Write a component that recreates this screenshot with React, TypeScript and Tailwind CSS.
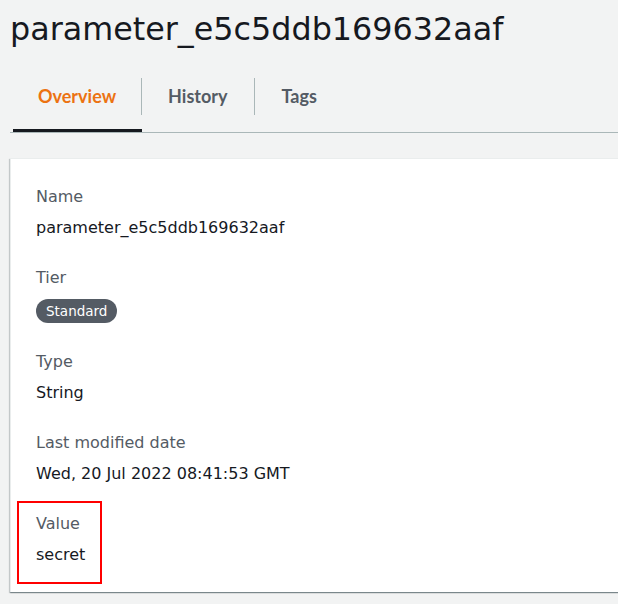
import React from "react";

const ROWS = [
  { label: "Name", value: "parameter_e5c5ddb169632aaf" },
  { label: "Tier", badge: "Standard" },
  { label: "Type", value: "String" },
  { label: "Last modified date", value: "Wed, 20 Jul 2022 08:41:53 GMT" },
];

const TABS = [
  { label: "Overview", pad: "pl-[28px] pr-[25px] text-[#ec7211]" },
  { label: "History", pad: "pl-[26px] pr-[27px] text-[#545b64]" },
  { label: "Tags", pad: "px-[26px] text-[#545b64]" },
];

export default function App() {
  return (
    <div
      className="w-[618px] h-[604px] overflow-hidden bg-[#f2f3f3] text-[#16191f]"
      style={{ fontFamily: '"DejaVu Sans", "Noto Sans", sans-serif' }}
    >
      {/* Title */}
      <h1 className="pt-[9px] pl-[10px] text-[31.8px] leading-[40px] font-normal whitespace-nowrap">
        parameter_e5c5ddb169632aaf
      </h1>

      {/* Tabs */}
      <div
        className="mt-[11px] ml-[10px] h-[73px] flex items-center border-b border-[#aab7b8]"
        style={{ fontFamily: 'Lato, "Open Sans", sans-serif' }}
      >
        {TABS.map((tab, i) => (
          <React.Fragment key={tab.label}>
            {i > 0 && <div className="w-px h-[37px] bg-[#aab7b8]" />}
            <div className={`relative h-full flex items-center text-[18px] font-bold ${tab.pad}`}>
              {tab.label}
              {i === 0 && (
                <div className="absolute left-[3px] -right-px bottom-0 h-[3px] bg-[#16191f]" />
              )}
            </div>
          </React.Fragment>
        ))}
      </div>

      {/* Card */}
      <div className="mt-[25px] ml-[10px] w-[640px] bg-white border-t border-l border-[#eaeded] shadow-[0_1px_1px_0_rgba(0,28,36,0.3),1px_1px_1px_0_rgba(0,28,36,0.15),-1px_1px_1px_0_rgba(0,28,36,0.15)] pt-[27px] pb-[26px] pl-[25px] flex flex-col gap-[28px] text-[16px] leading-[22px]">
        {ROWS.map((row) => (
          <div key={row.label} className="flex flex-col">
            <div className="text-[#545b64]">{row.label}</div>
            {row.badge ? (
              <div className="mt-[10px]">
                <span className="inline-flex items-center h-[24px] px-[10px] rounded-full bg-[#545b64] text-white text-[13.5px]">
                  {row.badge}
                </span>
              </div>
            ) : (
              <div className="mt-[9px]">{row.value}</div>
            )}
          </div>
        ))}

        {/* Value, highlighted */}
        <div className="relative flex flex-col">
          <div className="absolute -left-[19px] -top-[12px] w-[85px] h-[83px] border-2 border-[#f00]" />
          <div className="text-[#545b64]">Value</div>
          <div className="mt-[9px]">secret</div>
        </div>
      </div>
    </div>
  );
}
